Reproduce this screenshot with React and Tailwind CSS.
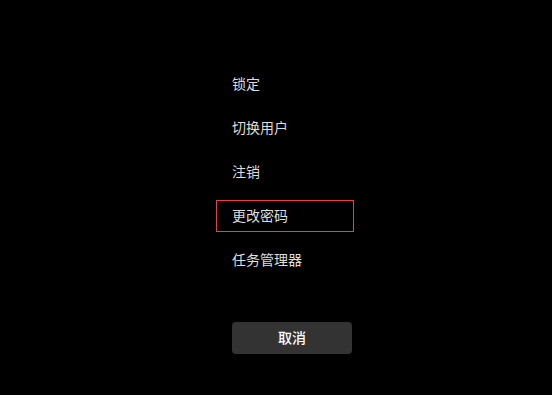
import React from 'react';

const items = ['锁定', '切换用户', '注销', '更改密码', '任务管理器'];

const App = () => {
  const focused = 3;
  return (
    <div
      className="w-[552px] h-[395px] bg-black overflow-hidden"
      style={{ fontFamily: '"Microsoft YaHei", "Noto Sans CJK SC", sans-serif' }}
    >
      <div className="ml-[216px] pt-[68px] flex flex-col gap-[12px]">
        {items.map((label, i) => (
          <div
            key={label}
            className={`w-[138px] h-[32px] flex items-center pl-[15px] pb-[3px] leading-none text-[14px] text-[#dedede] border ${
              i === focused ? 'border-[#e0434b]' : 'border-transparent'
            }`}
          >
            {label}
          </div>
        ))}
      </div>

      {/* Cancel */}
      <button className="ml-[232px] mt-[46px] w-[120px] h-[32px] pb-[2px] rounded-[4px] bg-[#333333] text-white text-[14px] font-medium leading-none flex items-center justify-center">
        取消
      </button>
    </div>
  );
};

export default App;
